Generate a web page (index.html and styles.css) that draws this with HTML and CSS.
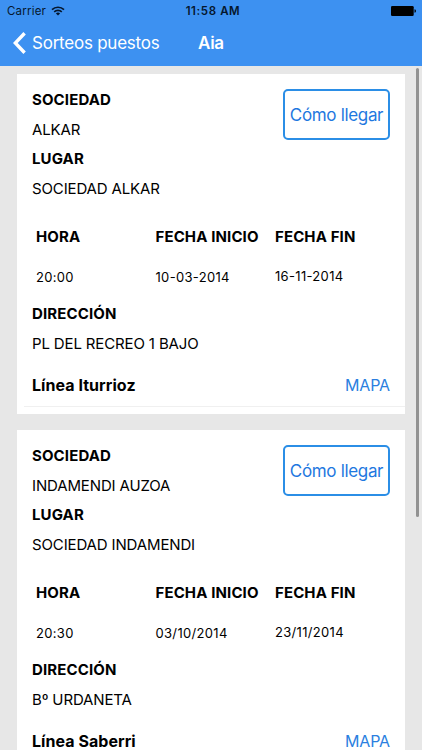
FILE: index.html
```html
<!DOCTYPE html>
<html lang="es">
<head>
    <meta charset="utf-8" />
    <title>Sorteos puestos</title>
    <link rel="stylesheet" href="styles.css">
</head>
<body>
    <header class="header">
        <div class="status">
            <div class="carrier">
                <span>Carrier</span>
                <svg class="wifi" width="14" height="10" viewBox="0 0 14 10" fill="none" stroke="#05172e">
                    <path d="M1 3.7C4.3.4 9.7.4 13 3.7" stroke-width="1.7" />
                    <path d="M3.2 5.9C5.3 3.9 8.7 3.9 10.8 5.9" stroke-width="1.6" />
                    <path d="M4.9 7.4C6.1 6.2 7.9 6.2 9.1 7.4L7 9.6Z" fill="#05172e" stroke="none" />
                </svg>
            </div>
            <span class="time">11:58 AM</span>
            <svg class="battery" width="25" height="10" viewBox="0 0 25 10">
                <rect width="22.7" height="10" rx="1.3" />
                <path d="M23.5 3.3Q25 3.5 25 5T23.5 6.7Z" />
            </svg>
        </div>
        <nav class="nav">
            <a class="back">
                <svg width="13" height="22" viewBox="0 0 13 22" fill="none" stroke="#fff" stroke-width="3.4">
                    <path d="M11.6 1.3L2.3 11L11.6 20.7" />
                </svg>
                <span>Sorteos puestos</span>
            </a>
            <h1 class="title">Aia</h1>
        </nav>
    </header>
    <main class="content">
        <!--Alkar-->
        <section class="card">
            <div class="top">
                <dl class="info">
                    <dt>SOCIEDAD</dt>
                    <dd>ALKAR</dd>
                    <dt>LUGAR</dt>
                    <dd>SOCIEDAD ALKAR</dd>
                </dl>
                <button class="route">Cómo llegar</button>
            </div>
            <div class="dates">
                <div><b>HORA</b><span>20:00</span></div>
                <div><b>FECHA INICIO</b><span>10-03-2014</span></div>
                <div class="end"><b>FECHA FIN</b><span>16-11-2014</span></div>
            </div>
            <dl class="info">
                <dt>DIRECCIÓN</dt>
                <dd>PL DEL RECREO 1 BAJO</dd>
            </dl>
            <div class="line">
                <b>Línea Iturrioz</b>
                <a class="map">MAPA</a>
            </div>
        </section>
        <!--Indamendi-->
        <section class="card">
            <div class="top">
                <dl class="info">
                    <dt>SOCIEDAD</dt>
                    <dd>INDAMENDI AUZOA</dd>
                    <dt>LUGAR</dt>
                    <dd>SOCIEDAD INDAMENDI</dd>
                </dl>
                <button class="route">Cómo llegar</button>
            </div>
            <div class="dates">
                <div><b>HORA</b><span>20:30</span></div>
                <div><b>FECHA INICIO</b><span>03/10/2014</span></div>
                <div class="end"><b>FECHA FIN</b><span>23/11/2014</span></div>
            </div>
            <dl class="info">
                <dt>DIRECCIÓN</dt>
                <dd>Bº URDANETA</dd>
            </dl>
            <div class="line">
                <b>Línea Saberri</b>
                <a class="map">MAPA</a>
            </div>
        </section>
        <div class="scrollbar"></div>
    </main>
</body>
</html>
```
FILE: styles.css
```css
* {
    box-sizing: border-box;
}

body {
    margin: 0;
    height: 750px;
    overflow: hidden;
    display: flex;
    flex-direction: column;
    background: #e7e7e7;
    color: #000;
    font-family: Inter, "Liberation Sans", sans-serif;
    font-size: 15px;
}

.header {
    flex: none;
    height: 66px;
    background: #3d91f1;
}

.status {
    display: grid;
    grid-template-columns: 1fr auto 1fr;
    align-items: center;
    height: 22px;
    padding: 0 6px 0 7px;
    color: #05172e;
    font-size: 11.5px;
}

.carrier {
    display: flex;
    align-items: center;
    gap: 5px;
    letter-spacing: .2px;
}

.time {
    padding-left: 3px;
    font-weight: 600;
    letter-spacing: .6px;
}

.battery {
    justify-self: end;
    fill: #000;
}

.nav {
    display: flex;
    align-items: center;
    height: 42px;
    padding-left: 13px;
    color: #fff;
}

.back {
    display: flex;
    align-items: center;
    gap: 6px;
    width: 185px;
    font-size: 17px;
    letter-spacing: -.23px;
    white-space: nowrap;
}

.title {
    margin: 0;
    font-size: 17px;
    font-weight: 600;
    letter-spacing: -.3px;
}

.content {
    position: relative;
    flex: 1;
    min-height: 0;
    overflow: hidden;
    padding: 7.5px 17px 0;
}

.card {
    height: 340.3px;
    margin-bottom: 16px;
    padding: 11.5px 15px 0;
    background: #fff;
}

.top {
    display: flex;
    justify-content: space-between;
    align-items: flex-start;
}

.info {
    margin: 0;
    line-height: 29.6px;
}

    .info dt, .dates b {
        font-weight: 700;
        letter-spacing: .12px;
    }

    .info dd {
        margin: 0;
        letter-spacing: -.14px;
    }

.route {
    width: 107px;
    height: 51px;
    margin-top: 4px;
    padding: 0;
    border: 2px solid #2b8ee6;
    border-radius: 5px;
    background: #fff;
    color: #1f78e0;
    font-family: inherit;
    font-size: 17px;
    letter-spacing: -.33px;
    white-space: nowrap;
}

.dates {
    display: grid;
    grid-template-columns: 119.5px 119.5px 1fr;
    height: 95.7px;
    padding: 23.5px 0 0 4px;
    white-space: nowrap;
}

    .dates div {
        display: flex;
        flex-direction: column;
        gap: 20px;
        line-height: 20px;
    }

    .dates span {
        font-size: 13px;
        letter-spacing: .32px;
    }

    .dates .end {
        gap: 19px;
    }

.line {
    display: flex;
    justify-content: space-between;
    align-items: center;
    height: 44px;
    margin: 4.8px -15px 0 -8px;
    padding: 0 15px 0 8px;
    border-bottom: 1px solid #f0f0f0;
    font-size: 16px;
}

    .line b {
        font-weight: 700;
        letter-spacing: .05px;
    }

.map {
    color: #2b7fe0;
    letter-spacing: -.15px;
}

.scrollbar {
    position: absolute;
    top: 2px;
    right: 3px;
    width: 3px;
    height: 449px;
    border-radius: 2px;
    background: #929292;
}
```
